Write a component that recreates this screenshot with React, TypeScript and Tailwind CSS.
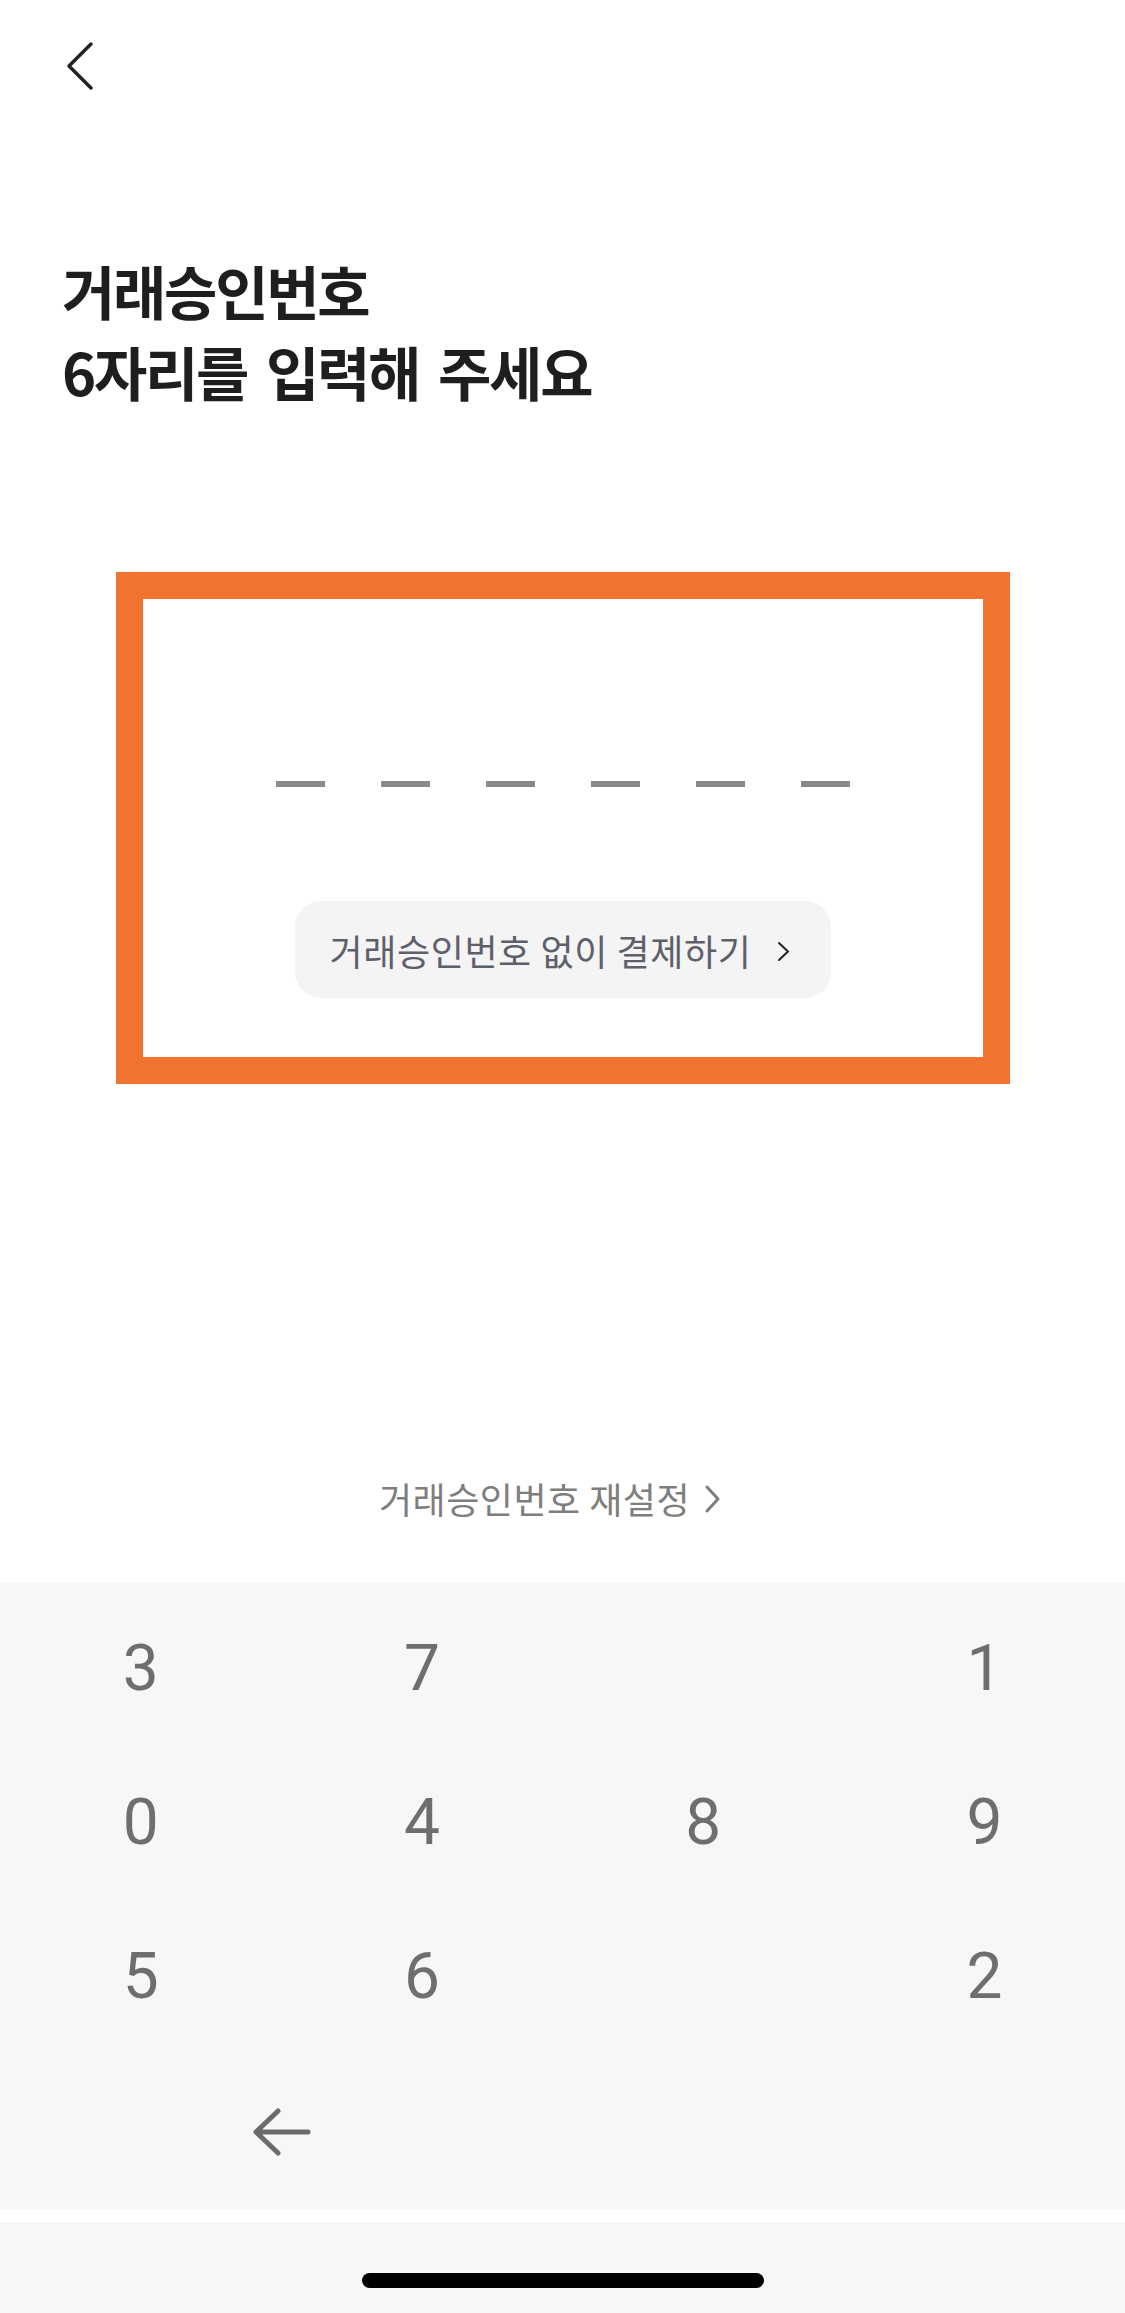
import React from 'react'

const KOREAN = `"Noto Sans CJK KR", "Noto Sans", sans-serif`

const rows: (string | null)[][] = [
    ['3', '7', null, '1'],
    ['0', '4', '8', '9'],
    ['5', '6', null, '2'],
]

const BackIcon = () => (
    <svg width="34" height="50" viewBox="0 0 34 50" fill="none">
        <path d="M27 3 L5 25 L27 47" stroke="#222222" strokeWidth="3.5" strokeLinecap="round" strokeLinejoin="round" />
    </svg>
)

const SmallChevron = ({ color, w, h, sw }: { color: string; w: number; h: number; sw: number }) => (
    <svg width={w} height={h} viewBox={`0 0 ${w} ${h}`} fill="none">
        <path d={`M${sw} ${sw} L${w - sw} ${h / 2} L${sw} ${h - sw}`} stroke={color} strokeWidth={sw} strokeLinecap="round" strokeLinejoin="round" />
    </svg>
)

const BackspaceIcon = () => (
    <svg width="60" height="48" viewBox="0 0 60 48" fill="none">
        <path d="M27 3 L5 24 L27 45 M5 24 L57 24" stroke="#6B6B6B" strokeWidth="5" strokeLinecap="round" strokeLinejoin="round" />
    </svg>
)

export default function App() {
    return (
        <div className="w-[1125px] h-[2313px] flex flex-col bg-white overflow-hidden" style={{ fontFamily: KOREAN }}>
            {/* header */}
            <div className="h-[250px] pt-[41px] pl-[64px]">
                <BackIcon />
            </div>

            {/* title */}
            <h1 className="pl-[62px] text-[58px] leading-[81px] font-bold text-[#1E1E1E] tracking-[-2.3px] [word-spacing:8px]">
                거래승인번호
                <br />
                6자리를 입력해 주세요
            </h1>

            {/* pin box */}
            <div className="mt-[160px] mx-auto w-[894px] h-[512px] border-[27px] border-[#F07430] flex flex-col items-center pt-[182px]">
                <div className="flex gap-[56px]">
                    {[0, 1, 2, 3, 4, 5].map(i => (
                        <div key={i} className="w-[49px] h-[6px] bg-[#8A8A8A]" />
                    ))}
                </div>
                <button className="mt-[114px] w-[536px] h-[97px] rounded-[26px] bg-[#F4F4F4] flex items-center pl-[35px]">
                    <span className="text-[36px] text-[#5D606B] tracking-[0.6px] leading-none">거래승인번호 없이 결제하기</span>
                    <span className="ml-[26px] mt-[4px]">
                        <SmallChevron color="#222222" w={13} h={21} sw={2} />
                    </span>
                </button>
            </div>

            {/* reset link */}
            <div className="mt-[396px] flex items-center justify-center pr-[25px]">
                <span className="text-[36px] text-[#7E7E7E] tracking-[0.5px] leading-none">거래승인번호 재설정</span>
                <span className="ml-[14px] mt-[2px]">
                    <SmallChevron color="#7E7E7E" w={17} h={30} sw={3} />
                </span>
            </div>

            {/* keypad */}
            <div className="mt-[67px] h-[626px] bg-[#F7F7F7] pt-[9px]" style={{ fontFamily: 'Roboto, "Noto Sans", sans-serif' }}>
                {rows.map((row, r) => (
                    <div key={r} className="grid grid-cols-4 h-[154px]">
                        {row.map((d, c) => (
                            <div key={c} className="flex items-center justify-center text-[64px] text-[#6E6E6E] leading-none">
                                {d ?? ''}
                            </div>
                        ))}
                    </div>
                ))}
                <div className="grid grid-cols-2 h-[154px]">
                    <div className="flex items-center justify-center pt-[2px]">
                        <BackspaceIcon />
                    </div>
                    <div />
                </div>
            </div>

            {/* home indicator */}
            <div className="mt-[13px] flex-1 bg-[#F7F7F7] flex justify-center pt-[51px]">
                <div className="w-[402px] h-[15px] rounded-full bg-black" />
            </div>
        </div>
    )
}
